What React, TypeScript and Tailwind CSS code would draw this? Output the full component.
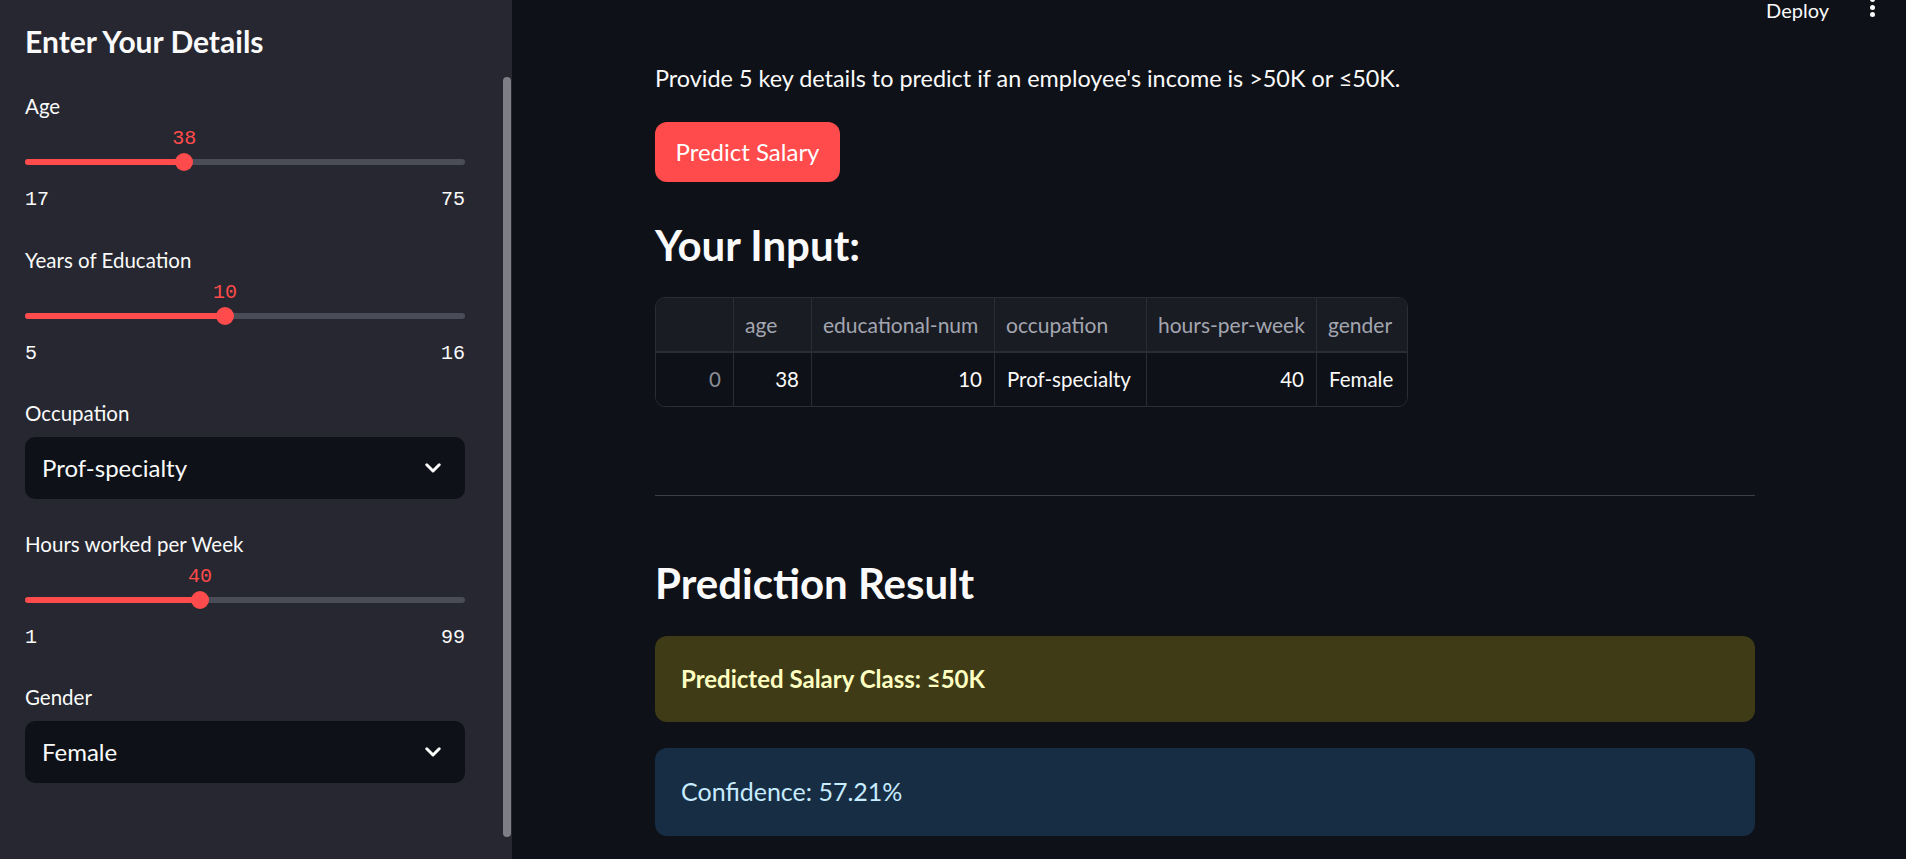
import React from 'react';

const sans = "font-['Lato',sans-serif]";
const mono = "font-['Liberation_Mono',monospace]";

interface SliderProps {
  label: string;
  value: number;
  min: number;
  max: number;
}

const SidebarSlider: React.FC<SliderProps> = ({ label, value, min, max }) => {
  const pct = ((value - min) / (max - min)) * 100;
  return (
    <div className="flex flex-col">
      <div className="h-[24px] text-[20.5px] leading-[24px] text-[#fafafa]">{label}</div>
      <div className="relative h-[91px]">
        {/* value above thumb */}
        <div
          className={`absolute top-[11px] -translate-x-1/2 text-[20px] leading-[20px] text-[#ff4b4b] ${mono}`}
          style={{ left: `${pct}%` }}
        >
          {value}
        </div>
        {/* track */}
        <div className="absolute left-0 right-0 top-[41px] h-[6px] rounded-full bg-[#4a4c57]">
          <div className="h-full rounded-full bg-[#ff4b4b]" style={{ width: `${pct}%` }} />
        </div>
        <div
          className="absolute top-[35px] h-[18px] w-[18px] -translate-x-1/2 rounded-full bg-[#ff4b4b]"
          style={{ left: `${pct}%` }}
        />
        <div className={`absolute left-0 right-0 top-[72px] flex justify-between text-[20px] leading-[20px] text-[#fafafa] ${mono}`}>
          <span>{min}</span>
          <span>{max}</span>
        </div>
      </div>
    </div>
  );
};

const SidebarSelect: React.FC<{ label: string; value: string }> = ({ label, value }) => (
  <div className="flex flex-col">
    <div className="h-[24px] text-[20.5px] leading-[24px] text-[#fafafa]">{label}</div>
    <div className="mt-[12px] flex h-[62px] items-center justify-between rounded-[10px] bg-[#0e1117] pl-[17px] pr-[24px]">
      <span className="text-[24px] text-[#fafafa]">{value}</span>
      <svg width="16" height="11" viewBox="0 0 16 11" fill="none">
        <path d="M1.8 1.8 L8 8 L14.2 1.8" stroke="#fafafa" strokeWidth="3" strokeLinecap="round" strokeLinejoin="round" />
      </svg>
    </div>
  </div>
);

const columns = ['', 'age', 'educational-num', 'occupation', 'hours-per-week', 'gender'];
const row = [
  { v: '0', right: true, muted: true },
  { v: '38', right: true },
  { v: '10', right: true },
  { v: 'Prof-specialty' },
  { v: '40', right: true },
  { v: 'Female' },
];

export default function App() {
  return (
    <div className={`flex h-screen w-full overflow-hidden bg-[#0e1117] ${sans}`}>
      {/* Sidebar */}
      <aside className="relative flex w-[512px] shrink-0 flex-col bg-[#262730] pl-[25px] pr-[47px] pt-[23px]">
        <h2 className="h-[36px] text-[30px] font-bold leading-[36px] text-[#fafafa]">Enter Your Details</h2>
        <div className="mt-[35px]">
          <SidebarSlider label="Age" value={38} min={17} max={75} />
        </div>
        <div className="mt-[39px]">
          <SidebarSlider label="Years of Education" value={10} min={5} max={16} />
        </div>
        <div className="mt-[38px]">
          <SidebarSelect label="Occupation" value="Prof-specialty" />
        </div>
        <div className="mt-[33px]">
          <SidebarSlider label="Hours worked per Week" value={40} min={1} max={99} />
        </div>
        <div className="mt-[38px]">
          <SidebarSelect label="Gender" value="Female" />
        </div>
        {/* scrollbar */}
        <div className="absolute right-[1px] top-[77px] h-[760px] w-[8px] rounded-full bg-[#7e7f86]" />
      </aside>

      {/* Main */}
      <main className="relative flex-1">
        <div className="absolute right-0 top-0 flex items-start text-[20px] leading-[20px] text-[#fafafa]">
          <span>Deploy</span>
          <div className="ml-[41px] mr-[31px] -mt-[3px] flex flex-col items-center gap-[2.5px]">
            <span className="h-[5px] w-[5px] rounded-full bg-[#fafafa]" />
            <span className="h-[5px] w-[5px] rounded-full bg-[#fafafa]" />
            <span className="h-[5px] w-[5px] rounded-full bg-[#fafafa]" />
          </div>
        </div>

        <div className="flex w-[1243px] flex-col pl-[143px] pt-[62px] text-[#fafafa]">
          <p className="h-[32px] whitespace-nowrap text-[23.4px] leading-[32px]">
            Provide 5 key details to predict if an employee's income is &gt;50K or ≤50K.
          </p>
          <button className="mt-[28px] flex h-[60px] w-[185px] items-center justify-center rounded-[12px] bg-[#ff4b4b] text-[24px] text-white">
            Predict Salary
          </button>

          <h3 className="mt-[39px] h-[48px] text-[42px] font-bold leading-[48px]">Your Input:</h3>

          <div className="mt-[28px] w-[753px] overflow-hidden rounded-[10px] border border-[#2b2d36]">
            <div className="grid grid-cols-[78px_78px_183px_152px_170px_91px] bg-[#1a1c24] text-[21px]">
              {columns.map((c, i) => (
                <div
                  key={i}
                  className={`flex h-[55px] items-center whitespace-nowrap border-b-2 border-[#2b2d36] px-[11px] text-[#a3a6b0] ${i < columns.length - 1 ? 'border-r' : ''}`}
                >
                  {c}
                </div>
              ))}
            </div>
            <div className="grid grid-cols-[78px_78px_183px_152px_170px_91px] bg-[#0e1117] text-[20.5px]">
              {row.map((c, i) => (
                <div
                  key={i}
                  className={`flex h-[53px] items-center whitespace-nowrap px-[12px] ${c.right ? 'justify-end' : 'justify-start'} ${c.muted ? 'text-[#8b8e98]' : 'text-[#fafafa]'} ${i < row.length - 1 ? 'border-r border-[#2b2d36]' : ''}`}
                >
                  {c.v}
                </div>
              ))}
            </div>
          </div>

          <hr className="mt-[88px] border-0 border-t border-[#3d3f47]" />

          <h3 className="mt-[63px] h-[48px] text-[42px] font-bold leading-[48px]">Prediction Result</h3>

          <div className="mt-[29px] flex h-[86px] items-center rounded-[12px] bg-[#3e3b16] px-[26px] text-[24px] font-bold text-[#ffffc2]">
            Predicted Salary Class: ≤50K
          </div>
          <div className="mt-[26px] flex h-[88px] items-center rounded-[12px] bg-[#172d43] px-[26px] text-[25px] text-[#c7ebff]">
            Confidence: 57.21%
          </div>
        </div>
      </main>
    </div>
  );
}
